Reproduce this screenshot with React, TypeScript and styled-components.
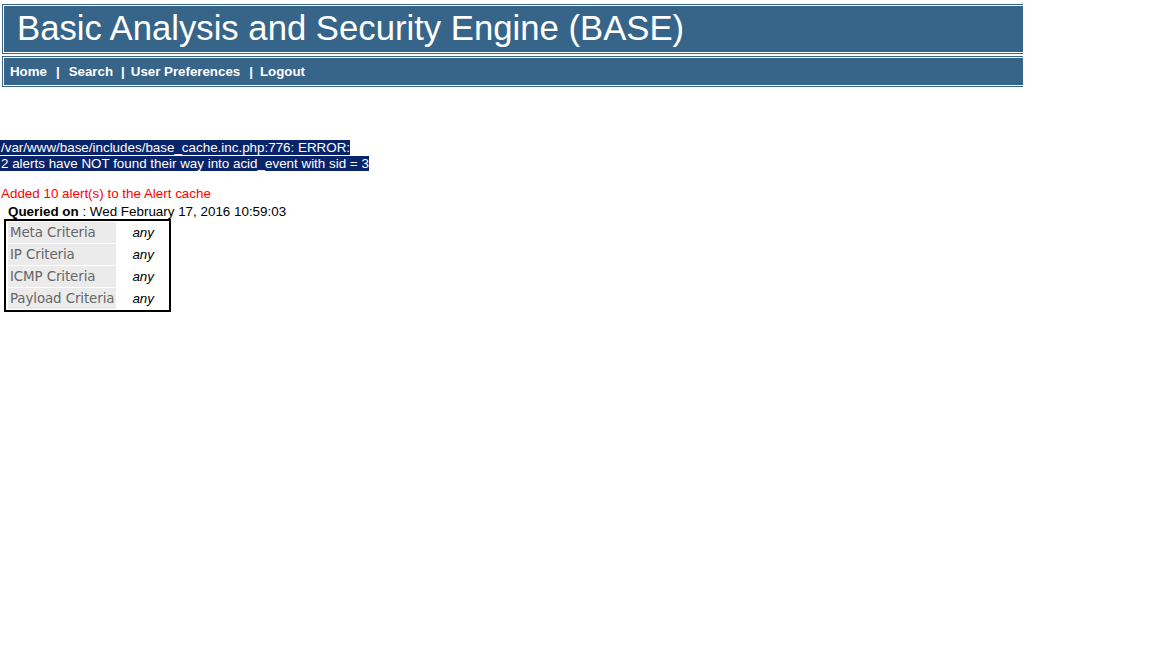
import React from 'react';
import styled, { createGlobalStyle } from 'styled-components';

const BLUE = '#37658a';

const GlobalStyle = createGlobalStyle`
	body {
		margin: 0;
		background: #ffffff;
		font-family: 'Liberation Sans', Arial, sans-serif;
	}
`;

const Page = styled.div`
	display: flex;
	flex-direction: column;
	padding-top: 4px;
`;

const BarFrame = styled.div<{ $gap?: number }>`
	width: 1019px;
	margin-left: 2px;
	border: 1px solid ${BLUE};
	border-right: none;
	padding: 1px 0 1px 1px;
	margin-bottom: ${(p) => p.$gap ?? 0}px;
`;

const TitleCell = styled.div`
	background: ${BLUE};
	height: 46px;
	display: flex;
	align-items: center;
	padding-left: 13px;
	color: #ffffff;
	font-size: 34.7px;
	line-height: 1;
	padding-bottom: 1px;
	box-sizing: border-box;
`;

const NavCell = styled.div`
	background: ${BLUE};
	height: 27px;
	display: flex;
	align-items: center;
	padding-left: 6px;
	color: #ffffff;
	font-size: 13.3px;
	font-weight: bold;
`;

const NavLink = styled.a`
	color: #ffffff;
	text-decoration: none;
`;

const Sep = styled.span<{ $before: number; $after: number }>`
	margin: 0 ${(p) => p.$after}px 0 ${(p) => p.$before}px;
`;

const ErrorBlock = styled.div`
	margin-top: 53px;
	font-size: 13.4px;
	line-height: 16px;
	color: #ffffff;
`;

const Highlight = styled.span`
	background: #0a246a;
	padding-left: 1px;
`;

const Notice = styled.div`
	margin-top: 13px;
	padding-left: 1px;
	color: #ff0000;
	font-size: 13.4px;
	line-height: 17px;
`;

const Queried = styled.div`
	margin-top: 3px;
	padding-left: 8px;
	font-size: 13.4px;
	line-height: 14px;
	color: #000000;
`;

const CriteriaTable = styled.table`
	margin-left: 4px;
	border: 2px solid #000000;
	border-spacing: 2px 1px;
	align-self: flex-start;
`;

const Label = styled.td`
	background: #ebebeb;
	color: #666666;
	font-family: 'DejaVu Sans', Verdana, sans-serif;
	font-size: 13.4px;
	height: 21px;
	padding: 0 2px;
	white-space: nowrap;
	letter-spacing: -0.1px;
`;

const Value = styled.td`
	font-style: italic;
	font-size: 13.4px;
	color: #000000;
	padding: 0 13px 0 14px;
`;

const criteria = ['Meta Criteria', 'IP Criteria', 'ICMP Criteria', 'Payload Criteria'];

export default function App() {
	return (
		<>
			<GlobalStyle />
			<Page>
				<BarFrame $gap={2}>
					<TitleCell>Basic Analysis and Security Engine (BASE)</TitleCell>
				</BarFrame>
				<BarFrame>
					<NavCell>
						<NavLink href="#">Home</NavLink>
						<Sep $before={9} $after={9}>|</Sep>
						<NavLink href="#">Search</NavLink>
						<Sep $before={8} $after={6}>|</Sep>
						<NavLink href="#">User Preferences</NavLink>
						<Sep $before={9} $after={7}>|</Sep>
						<NavLink href="#">Logout</NavLink>
					</NavCell>
				</BarFrame>
				<ErrorBlock>
					<Highlight>/var/www/base/includes/base_cache.inc.php:776: ERROR: </Highlight>
					<br />
					<Highlight>2 alerts have NOT found their way into acid_event with sid = 3</Highlight>
				</ErrorBlock>
				<Notice>Added 10 alert(s) to the Alert cache</Notice>
				<Queried>
					<b>Queried on</b> : Wed February 17, 2016 10:59:03
				</Queried>
				<CriteriaTable>
					<tbody>
						{criteria.map((c) => (
							<tr key={c}>
								<Label>{c}</Label>
								<Value>any</Value>
							</tr>
						))}
					</tbody>
				</CriteriaTable>
			</Page>
		</>
	);
}
